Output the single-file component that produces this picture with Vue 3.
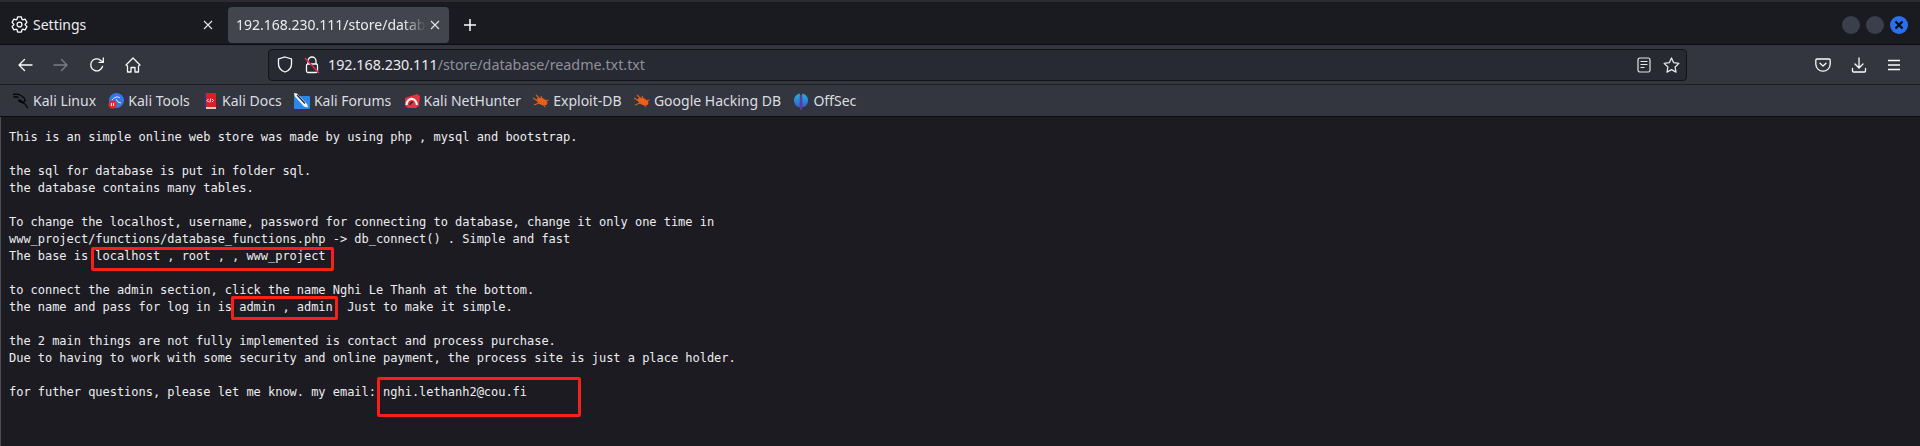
<script setup>
const text = `This is an simple online web store was made by using php , mysql and bootstrap.

the sql for database is put in folder sql.
the database contains many tables.

To change the localhost, username, password for connecting to database, change it only one time in
www_project/functions/database_functions.php -> db_connect() . Simple and fast
The base is localhost , root , , www_project

to connect the admin section, click the name Nghi Le Thanh at the bottom.
the name and pass for log in is admin , admin  Just to make it simple.

the 2 main things are not fully implemented is contact and process purchase.
Due to having to work with some security and online payment, the process site is just a place holder.

for futher questions, please let me know. my email: nghi.lethanh2@cou.fi`

const gearPath = (() => {
  const pts = []
  const polar = (r, deg) => {
    const a = (deg * Math.PI) / 180
    return `${(8 + r * Math.cos(a)).toFixed(2)} ${(8 + r * Math.sin(a)).toFixed(2)}`
  }
  for (let i = 0; i < 6; i++) {
    const c = i * 60 - 90
    pts.push(polar(5.3, c - 27), polar(7.3, c - 14), polar(7.3, c + 14), polar(5.3, c + 27))
  }
  return 'M' + pts.join('L') + 'Z'
})()
</script>

<template>
  <div class="browser">
    <header class="titlebar">
      <div class="tab">
        <svg class="gear" width="17" height="17" viewBox="0 0 16 16" fill="none" stroke="#fbfbfe" stroke-width="1.200" stroke-linejoin="round"><path :d="gearPath"/><circle cx="8" cy="8" r="2.300"/></svg>
        <span class="tab-label">Settings</span>
        <svg class="close" width="10" height="10" viewBox="0 0 10 10" stroke="#e6e6ea" stroke-width="1.100"><path d="M1 1l8 8M9 1L1 9"/></svg>
      </div>
      <div class="tab active">
        <span class="tab-label fade">192.168.230.111/store/database/readme.txt.txt</span>
        <svg class="close" width="10" height="10" viewBox="0 0 10 10" stroke="#e6e6ea" stroke-width="1.100"><path d="M1 1l8 8M9 1L1 9"/></svg>
      </div>
      <svg class="plus" width="14" height="14" viewBox="0 0 14 14" stroke="#fbfbfe" stroke-width="1.500"><path d="M7 1v12M1 7h12"/></svg>
      <div class="winbtns">
        <span class="winbtn"></span>
        <span class="winbtn"></span>
        <span class="winbtn blue">
          <svg width="10" height="10" viewBox="0 0 10 10" stroke="#0b0b10" stroke-width="2.200"><path d="M1.500 1.500l7 7M8.500 1.500l-7 7"/></svg>
        </span>
      </div>
    </header>

    <nav class="navbar">
      <div class="navbtn">
        <svg width="16" height="16" viewBox="0 0 16 16" fill="none" stroke="#fbfbfe" stroke-width="1.300" stroke-linecap="round" stroke-linejoin="round"><path d="M15 8H2M7.500 2.500L2 8l5.500 5.500"/></svg>
      </div>
      <div class="navbtn">
        <svg width="16" height="16" viewBox="0 0 16 16" fill="none" stroke="#7c7e86" stroke-width="1.300" stroke-linecap="round" stroke-linejoin="round"><path d="M1 8h13M8.500 2.500L14 8l-5.500 5.500"/></svg>
      </div>
      <div class="navbtn">
        <svg width="16" height="16" viewBox="0 0 16 16" fill="none" stroke="#fbfbfe" stroke-width="1.300" stroke-linecap="round" stroke-linejoin="round"><path d="M13.500 9.500A6 6 0 1 1 11.500 3.200L14 5"/><path d="M14.300 1v4.300H10" /></svg>
      </div>
      <div class="navbtn">
        <svg width="16" height="16" viewBox="0 0 16 16" fill="none" stroke="#fbfbfe" stroke-width="1.300" stroke-linejoin="round"><path d="M1 8l7-7 7 7-1.500 1V15h-3.500v-4.500H6V15H2.500V9z"/></svg>
      </div>
      <div class="urlbar">
        <svg class="shield" width="16" height="17" viewBox="0 0 16 17" fill="none" stroke="#fbfbfe" stroke-width="1.300"><path d="M8 1l6.500 2v5c0 4-3 6.800-6.500 8C4.500 14.800 1.500 12 1.500 8V3z"/></svg>
        <svg class="lock" width="16" height="18" viewBox="0 0 16 18" fill="none"><path d="M4 8V5a4 4 0 0 1 8 0v3" stroke="#fbfbfe" stroke-width="1.300"/><rect x="2.500" y="8" width="11" height="8.500" rx="1.500" stroke="#fbfbfe" stroke-width="1.300"/><path d="M1 2l14 15" stroke="#e22850" stroke-width="1.600"/></svg>
        <span class="url"><span class="host">192.168.230.111</span><span class="path">/store/database/readme.txt.txt</span></span>
        <svg class="reader" width="14" height="16" viewBox="0 0 14 16" fill="none" stroke="#e6e6ea" stroke-width="1.200"><rect x="1" y="1" width="12" height="14" rx="1.800"/><path d="M3.500 4.500h7M3.500 7.500h7M3.500 10.500h4"/></svg>
        <svg class="star" width="17" height="16" viewBox="0 0 17 16" fill="none" stroke="#e6e6ea" stroke-width="1.300" stroke-linejoin="round"><path d="M8.500 1l2.200 4.700 5.200.7-3.800 3.600.9 5.100-4.500-2.500L4 15.100l.9-5.100L1.100 6.400l5.200-.7z"/></svg>
      </div>
      <div class="tools">
        <svg width="16" height="16" viewBox="0 0 16 16" fill="none" stroke="#fbfbfe" stroke-width="1.300" stroke-linecap="round" stroke-linejoin="round"><path d="M2 2h12a1.200 1.200 0 0 1 1.200 1.200V7A7.200 7.200 0 0 1 .8 7V3.200A1.200 1.200 0 0 1 2 2z"/><path d="M5 6.200l3 2.800 3-2.800"/></svg>
        <svg width="16" height="16" viewBox="0 0 16 16" fill="none" stroke="#fbfbfe" stroke-width="1.300" stroke-linecap="round" stroke-linejoin="round"><path d="M8 1v9.500M4 7l4 4 4-4M1.500 11.500v2.500a1 1 0 0 0 1 1h11a1 1 0 0 0 1-1v-2.500"/></svg>
        <svg width="14" height="12" viewBox="0 0 14 12" stroke="#fbfbfe" stroke-width="1.300"><path d="M1 1.500h12M1 6h12M1 10.500h12"/></svg>
      </div>
    </nav>

    <div class="bookmarks">
      <a class="bm">
        <svg width="16" height="16" viewBox="0 0 16 16" fill="none" stroke="#050507" stroke-width="1.300" stroke-linecap="round" stroke-linejoin="round"><path d="M0 1.500c3-.5 5-.5 7 .5 3 1.500 5 3.500 5 5.500 0 1.500-2 1.700-3 1-1-.7-1.500-1.700-2.500-1.700-1 0-1 1.200 0 1.700 2 1 5 1.200 6 3 .5 1 1 2 2 3M1 4c2-.5 3-.3 4 .5"/></svg>
        <span>Kali Linux</span>
      </a>
      <a class="bm">
        <svg width="16" height="16" viewBox="0 0 16 16"><circle cx="8.500" cy="7.500" r="7.500" fill="#3478e0"/><path d="M4 7c2-3 6-4 8-2M8 6l2 3 3 1" fill="none" stroke="#dfeaff" stroke-width="1"/><circle cx="4.500" cy="11.500" r="4" fill="#e8262b"/><path d="M3.400 10v3M5.600 10v3" stroke="#fff" stroke-width="1"/></svg>
        <span>Kali Tools</span>
      </a>
      <a class="bm">
        <svg width="16" height="16" viewBox="0 0 16 16"><rect x="2" y="0" width="12" height="16" rx="1" fill="#d3222a"/><rect x="2" y="0" width="2" height="16" fill="#30376e"/><rect x="4" y="14" width="10" height="2" fill="#e8c9b8"/><path d="M6.500 6l-1.500 1.500L6.500 9M10 6l1.500 1.500L10 9M8.800 5.500l-1 4" fill="none" stroke="#fff" stroke-width="1"/></svg>
        <span>Kali Docs</span>
      </a>
      <a class="bm">
        <svg width="16" height="16" viewBox="0 0 16 16"><rect y="3" width="16" height="13" rx="1" fill="#2b86ea"/><path d="M0 0l3 .5 10 10.500 1 3.500-4-1L.5 3z" fill="#f4f6f8"/><path d="M3 2l8 8.500" stroke="#23252b" stroke-width="1.200"/></svg>
        <span>Kali Forums</span>
      </a>
      <a class="bm">
        <svg width="16" height="16" viewBox="0 0 16 16" fill="none"><path d="M1 5l12-4 3 2-1 10-3 2H4L1 13z" fill="#e8323c"/><path d="M2.500 12c0-4 3-6.500 6-6 2.500.5 4 3 4.500 6" stroke="#f6f6f6" stroke-width="2.200"/><path d="M6 12c0-2 1.500-3 3-2.500" stroke="#2a2b33" stroke-width="1.500"/></svg>
        <span>Kali NetHunter</span>
      </a>
      <a class="bm">
        <svg width="16" height="16" viewBox="0 0 16 16"><ellipse cx="9" cy="8.500" rx="5.800" ry="3.300" transform="rotate(25 9 8.500)" fill="#e8601c"/><path d="M0 5l5 3M3 2l4 4M8 3l1 3M15.500 7l-3 1M1 12l5-2M12 14l-2-3" stroke="#d9611e" stroke-width="1.100"/></svg>
        <span>Exploit-DB</span>
      </a>
      <a class="bm">
        <svg width="16" height="16" viewBox="0 0 16 16"><ellipse cx="9" cy="8.500" rx="5.800" ry="3.300" transform="rotate(25 9 8.500)" fill="#e8601c"/><path d="M0 5l5 3M3 2l4 4M8 3l1 3M15.500 7l-3 1M1 12l5-2M12 14l-2-3" stroke="#d9611e" stroke-width="1.100"/></svg>
        <span>Google Hacking DB</span>
      </a>
      <a class="bm">
        <svg width="16" height="18" viewBox="0 0 16 18"><defs><linearGradient id="os" x1="0" y1="0" x2="0" y2="1"><stop offset="0" stop-color="#23b3d8"/><stop offset="1" stop-color="#3b5bd6"/></linearGradient></defs><path d="M6.800 1.500C3 2.300 1 5 1 8.500s2 6 5.800 7z" fill="url(#os)"/><path d="M9.200 1.500C13 2.300 15 5 15 8.500s-2 6-5.800 7z" fill="url(#os)"/><path d="M8 3v15" stroke="#7a3fe0" stroke-width="1.200"/></svg>
        <span>OffSec</span>
      </a>
    </div>

    <main class="content">
      <pre class="doc">{{ text }}</pre>
      <div class="mark m1"></div>
      <div class="mark m2"></div>
      <div class="mark m3"></div>
    </main>
  </div>
</template>

<style>
html, body { margin: 0; padding: 0; background: #1c1b22; overflow: hidden; }
</style>

<style scoped>
.browser {
  display: flex;
  flex-direction: column;
  height: 446px;
  width: 1920px;
  overflow: hidden;
  font-family: "Noto Sans", sans-serif;
  color: #fbfbfe;
  background: #1c1b22;
}
.titlebar {
  box-sizing: border-box;
  height: 45px;
  flex: none;
  display: flex;
  align-items: center;
  padding: 3px 0 0 4px;
  gap: 3px;
  background: #1a1b20;
  border-top: 2px solid #2b2b31;
  border-bottom: 1px solid #0d0d10;
}
.tab {
  box-sizing: border-box;
  width: 221px;
  height: 36px;
  display: flex;
  align-items: center;
  padding: 0 12px 0 7px;
  border-radius: 4px;
  font-size: 14px;
  color: #ecedf0;
}
.tab.active { background: #42454d; padding: 0 9px 0 8px; }
.gear { flex: none; margin-right: 5px; }
.tab-label { flex: 1; white-space: nowrap; overflow: hidden; }
.fade {
  -webkit-mask-image: linear-gradient(to right, #000 88%, transparent 100%);
  mask-image: linear-gradient(to right, #000 88%, transparent 100%);
}
.close { flex: none; margin-left: 4px; }
.plus { margin-left: 11px; }
.winbtns {
  margin-left: auto;
  margin-right: 12px;
  display: flex;
  gap: 6px;
}
.winbtn {
  width: 18px;
  height: 18px;
  border-radius: 50%;
  background: #3a3f4b;
  display: flex;
  align-items: center;
  justify-content: center;
}
.winbtn.blue { background: #2a6ff0; }

.navbar {
  box-sizing: border-box;
  height: 39px;
  flex: none;
  display: flex;
  align-items: center;
  padding-left: 17px;
  background: #33363f;
}
.navbtn {
  width: 36px;
  display: flex;
  justify-content: flex-start;
  flex: none;
}
.urlbar {
  box-sizing: border-box;
  margin-left: 107px;
  width: 1419px;
  height: 32px;
  flex: none;
  display: flex;
  align-items: center;
  padding-left: 8px;
  background: #272933;
  border: 1px solid #14151a;
  border-radius: 4px;
}
.shield { flex: none; margin-right: 11px; }
.lock { flex: none; margin-right: 8px; }
.url { font-size: 14.300px; white-space: nowrap; flex: 1; }
.host { color: #ecedf0; }
.path { color: #8f9098; }
.reader { flex: none; margin-right: 12px; }
.star { flex: none; margin-right: 6px; }
.tools {
  margin-left: 128px;
  display: flex;
  align-items: center;
  gap: 20px;
}

.bookmarks {
  box-sizing: border-box;
  height: 33px;
  flex: none;
  display: flex;
  align-items: center;
  padding-left: 13px;
  gap: 12.300px;
  background: #33363f;
  border-top: 1px solid #1d1e24;
  border-bottom: 1px solid #0d0d10;
  font-size: 14px;
  color: #dcdde0;
}
.bm { display: flex; align-items: center; gap: 4px; white-space: nowrap; }

.content {
  position: relative;
  flex: 1;
  border-left: 1px solid #4d4d52;
  background: #1c1b22;
}
.doc {
  margin: 0;
  padding: 12px 0 0 8px;
  font-family: "DejaVu Sans Mono", monospace;
  font-size: 12px;
  letter-spacing: -0.030px;
  line-height: 17px;
  color: #ecedf0;
}
.mark {
  position: absolute;
  box-sizing: border-box;
  border: 3px solid #fb1f1a;
  border-radius: 2px;
}
.m1 { left: 90px; top: 130px; width: 243px; height: 24px; }
.m2 { left: 230px; top: 179px; width: 107px; height: 24px; }
.m3 { left: 376px; top: 260px; width: 204px; height: 40px; }
</style>
